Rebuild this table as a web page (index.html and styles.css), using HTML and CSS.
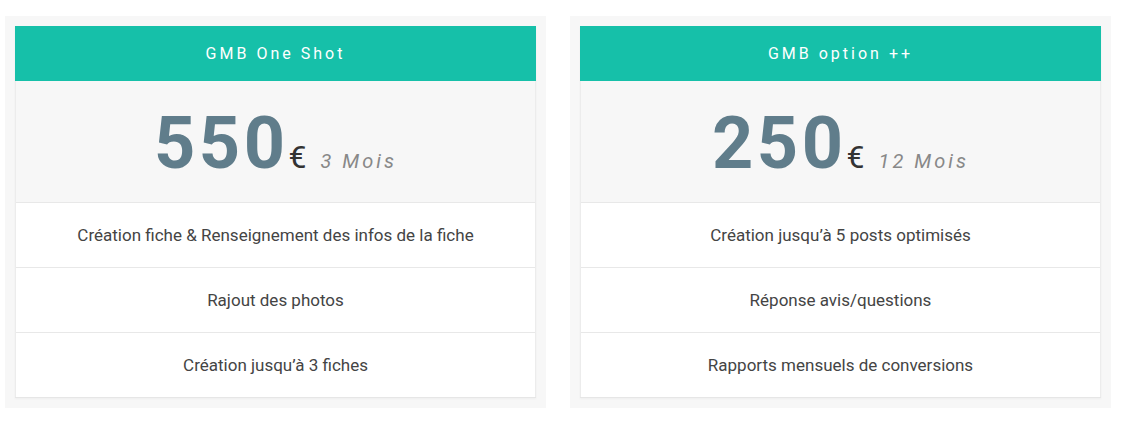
FILE: index.html
```html
<!DOCTYPE html>
<html lang="fr">
<head>
<meta charset="utf-8">
<title>Tarifs GMB</title>
<link rel="stylesheet" href="styles.css">
</head>
<body>
<div class="plans">
  <div class="plan">
    <div class="card">
      <div class="card-head">GMB One Shot</div>
      <div class="card-price">
        <span class="amount">550</span><span class="currency">€</span><span class="period">3 Mois</span>
      </div>
      <ul class="features">
        <li>Création fiche &amp; Renseignement des infos de la fiche</li>
        <li>Rajout des photos</li>
        <li>Création jusqu’à 3 fiches</li>
      </ul>
    </div>
  </div>
  <div class="plan">
    <div class="card">
      <div class="card-head">GMB option ++</div>
      <div class="card-price">
        <span class="amount">250</span><span class="currency">€</span><span class="period">12 Mois</span>
      </div>
      <ul class="features">
        <li>Création jusqu’à 5 posts optimisés</li>
        <li>Réponse avis/questions</li>
        <li>Rapports mensuels de conversions</li>
      </ul>
    </div>
  </div>
</div>
</body>
</html>
```

FILE: styles.css
```css
html, body {
  margin: 0;
  padding: 0;
  background: #ffffff;
  font-family: Roboto, "Liberation Sans", sans-serif;
}

.plans {
  display: flex;
  gap: 24px;
  padding: 16px 10px 0 5px;
}

.plan {
  width: 541px;
  background: #f7f7f7;
  padding: 10px;
  box-sizing: border-box;
}

.card {
  background: #ffffff;
  border-bottom: 1px solid #e6e6e6;
  box-shadow: 0 1px 2px rgba(0, 0, 0, 0.04);
}

.card-head {
  height: 55px;
  background: #16c0a9;
  color: #ffffff;
  font-size: 16px;
  font-weight: 400;
  letter-spacing: 3px;
  display: flex;
  align-items: center;
  justify-content: center;
}

.card-price {
  height: 121px;
  background: #f7f7f7;
  border-left: 1px solid #ececec;
  border-right: 1px solid #ececec;
  display: flex;
  align-items: baseline;
  justify-content: center;
  padding-top: 17px;
  box-sizing: border-box;
}

.amount {
  font-size: 72px;
  font-weight: 700;
  color: #607d8b;
  letter-spacing: 3.5px;
  line-height: 92px;
}

.currency {
  font-size: 32px;
  color: #333333;
  margin-left: 0;
}

.period {
  font-size: 20px;
  font-style: italic;
  color: #888888;
  letter-spacing: 3px;
  margin-left: 14px;
}

.features {
  list-style: none;
  margin: 0;
  padding: 0;
  border-left: 1px solid #ececec;
  border-right: 1px solid #ececec;
}

.features li {
  height: 65px;
  border-top: 1px solid #e8e8e8;
  box-sizing: border-box;
  display: flex;
  align-items: center;
  justify-content: center;
  font-size: 17px;
  color: #444444;
}
```
